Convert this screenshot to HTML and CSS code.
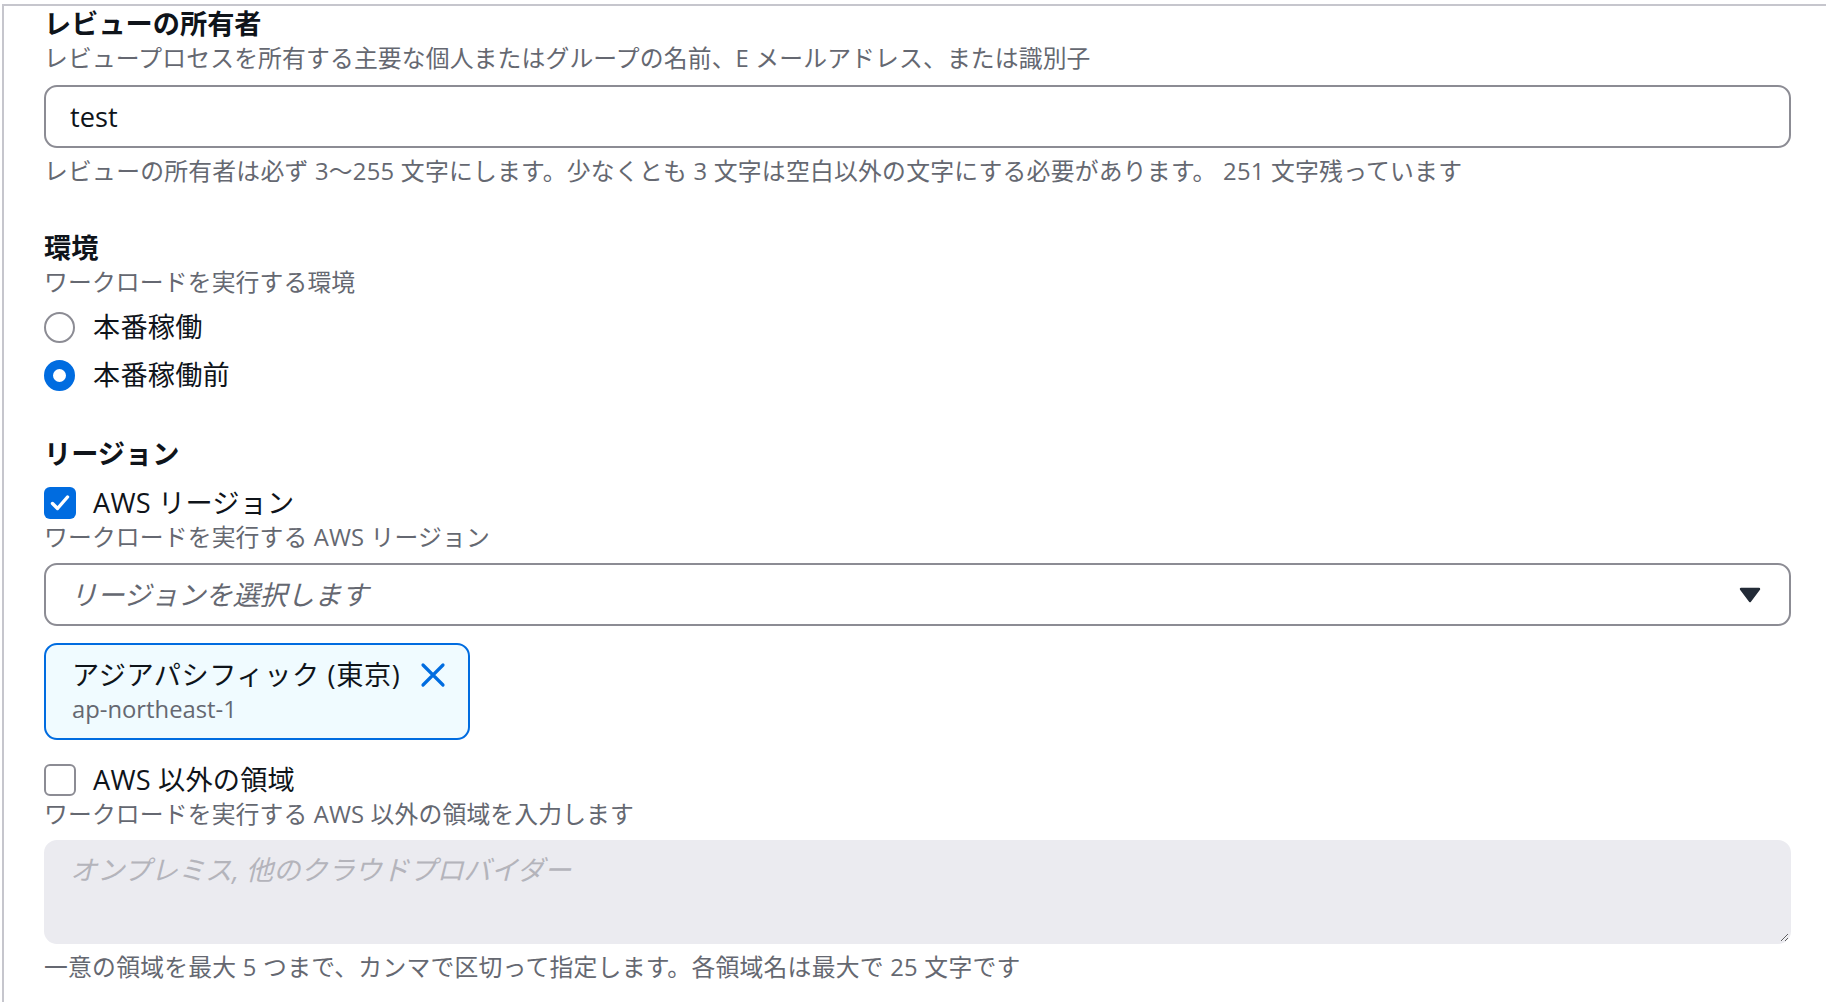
FILE: index.html
```html
<!DOCTYPE html>
<html lang="ja">
<head>
<meta charset="utf-8">
<title>レビューの所有者</title>
<link rel="stylesheet" href="styles.css">
</head>
<body>
<div class="panel">
  <section class="field field-owner">
    <div class="label">レビューの所有者</div>
    <div class="desc">レビュープロセスを所有する主要な個人またはグループの名前、E メールアドレス、または識別子</div>
    <input class="text-input" type="text" value="test">
    <div class="constraint">レビューの所有者は必ず 3〜255 文字にします。少なくとも 3 文字は空白以外の文字にする必要があります。 251 文字残っています</div>
  </section>

  <section class="field field-env">
    <div class="label">環境</div>
    <div class="desc">ワークロードを実行する環境</div>
    <div class="radio-group">
      <div class="radio-row"><span class="radio"></span><span class="opt">本番稼働</span></div>
      <div class="radio-row"><span class="radio checked"></span><span class="opt">本番稼働前</span></div>
    </div>
  </section>

  <section class="field field-region">
    <div class="label">リージョン</div>
    <div class="check-row">
      <span class="checkbox checked"><svg viewBox="0 0 32 32" width="32" height="32"><polyline points="8.5,16.5 13.5,21.5 23.5,10" fill="none" stroke="#fff" stroke-width="3.4" stroke-linecap="round" stroke-linejoin="round"/></svg></span>
      <span class="opt">AWS リージョン</span>
    </div>
    <div class="desc">ワークロードを実行する AWS リージョン</div>
    <div class="select">
      <span class="placeholder">リージョンを選択します</span>
      <svg class="caret" viewBox="0 0 22 16" width="22" height="16"><polygon points="2,2 20,2 11,14" fill="#232b37" stroke="#232b37" stroke-width="2.4" stroke-linejoin="round"/></svg>
    </div>
    <div class="token">
      <div class="token-text">
        <div class="token-title">アジアパシフィック (東京)</div>
        <div class="token-sub">ap-northeast-1</div>
      </div>
      <svg class="token-x" viewBox="0 0 26 26" width="26" height="26"><path d="M3 3 L23 23 M23 3 L3 23" stroke="#006ce0" stroke-width="3.2" stroke-linecap="round"/></svg>
    </div>
    <div class="check-row check-other">
      <span class="checkbox"></span>
      <span class="opt">AWS 以外の領域</span>
    </div>
    <div class="desc">ワークロードを実行する AWS 以外の領域を入力します</div>
    <textarea class="textarea" disabled placeholder="オンプレミス, 他のクラウドプロバイダー"></textarea>
    <div class="constraint bottom">一意の領域を最大 5 つまで、カンマで区切って指定します。各領域名は最大で 25 文字です</div>
  </section>
</div>
</body>
</html>
```

FILE: styles.css
```css
html, body {
  margin: 0;
  padding: 0;
  background: #ffffff;
}

body {
  font-family: "Open Sans", "Noto Sans CJK JP", sans-serif;
  font-size: 23.8px;
  line-height: 34px;
  color: #0f141a;
}

.panel {
  margin: 4px 0 0 2px;
  border-top: 2px solid #c6c6cd;
  border-left: 2px solid #c6c6cd;
  padding: 1px 35px 40px 40px;
}

.field {
  display: flex;
  flex-direction: column;
  align-items: stretch;
}

.field-env { margin-top: 43px; }
.field-region { margin-top: 38px; }

.label {
  font-size: 27.2px;
  line-height: 34px;
  font-weight: 700;
  color: #0f141a;
}

.desc {
  color: #656871;
  line-height: 34px;
  letter-spacing: 0.15px;
}

.opt {
  font-size: 27.2px;
  line-height: 34px;
  color: #0f141a;
  letter-spacing: 0.2px;
}

.text-input {
  box-sizing: border-box;
  margin: 10px 0 0 0;
  height: 63px;
  width: 100%;
  border: 2px solid #8c8c94;
  border-radius: 13px;
  padding: 0 24px;
  font-family: inherit;
  font-size: 27.2px;
  color: #0f141a;
  background: #ffffff;
  outline: none;
}

.constraint {
  margin-top: 6px;
  color: #656871;
  letter-spacing: 0.25px;
}

.radio-group {
  margin-top: 4px;
  display: flex;
  flex-direction: column;
}

.radio-row {
  height: 48px;
  display: flex;
  align-items: center;
  gap: 18px;
}

.radio {
  box-sizing: border-box;
  width: 31px;
  height: 31px;
  border-radius: 50%;
  border: 2px solid #8c8c94;
  background: #ffffff;
  flex: none;
}

.radio.checked {
  border: 9px solid #006ce0;
}

.check-row {
  margin-top: 15px;
  height: 34px;
  display: flex;
  align-items: center;
  gap: 17px;
}

.check-other { margin-top: 23px; }

.checkbox {
  box-sizing: border-box;
  width: 32px;
  height: 32px;
  border-radius: 6px;
  border: 2px solid #8c8c94;
  background: #ffffff;
  flex: none;
  display: flex;
}

.checkbox.checked {
  border: none;
  background: #006ce0;
}

.select {
  box-sizing: border-box;
  margin-top: 9px;
  height: 63px;
  border: 2px solid #8c8c94;
  border-radius: 13px;
  display: flex;
  align-items: center;
  justify-content: space-between;
  padding: 0 28px 0 24px;
}

.placeholder {
  font-size: 27.2px;
  font-style: italic;
  color: #656871;
}

.caret { flex: none; }

.token {
  box-sizing: border-box;
  margin-top: 17px;
  align-self: flex-start;
  display: flex;
  align-items: flex-start;
  gap: 20px;
  border: 2px solid #006ce0;
  border-radius: 13px;
  background: #f0fbff;
  padding: 13px 22px 12px 26px;
}

.token-title {
  font-size: 27.2px;
  line-height: 34px;
  letter-spacing: 0.6px;
}

.token-sub {
  font-size: 23.8px;
  line-height: 34px;
  color: #656871;
}

.token-x {
  flex: none;
  margin-top: 4px;
}

.textarea {
  box-sizing: border-box;
  display: block;
  margin-top: 9px;
  width: 100%;
  height: 104px;
  border: 2px solid #ebebf0;
  border-radius: 13px;
  background: #ebebf0;
  padding: 11px 24px 7px;
  font-family: inherit;
  font-size: 27.2px;
  line-height: 34px;
  color: #b4b4bb;
  resize: both;
}

.textarea::placeholder {
  font-style: italic;
  color: #b4b4bb;
  opacity: 1;
}

.bottom { margin-top: 6px; }
```
